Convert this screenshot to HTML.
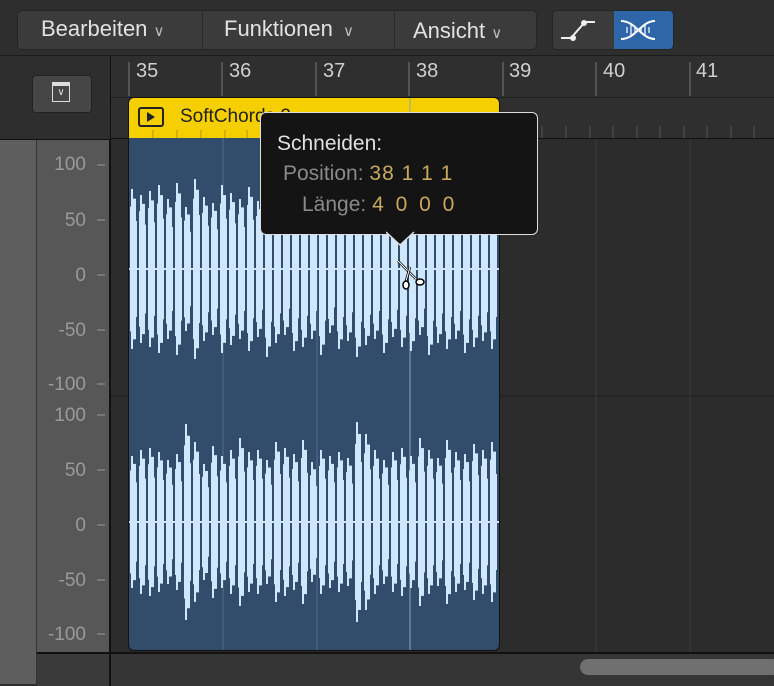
<!DOCTYPE html>
<html><head><meta charset="utf-8"><style>
body{margin:0;width:774px;height:684px;overflow:hidden;background:#2b2b2b;font-family:"Liberation Sans",sans-serif;position:relative}
.a{position:absolute}
.lbl{position:absolute;right:0;width:70px;text-align:right;color:#9a9a9a;font-size:19px}
</style></head><body>
<div class="a" style="left:0;top:0;width:774px;height:55px;background:#2e2e2e;border-bottom:1px solid #1c1c1c"></div>
<div class="a" style="left:17px;top:10px;width:518px;height:38px;background:#3b3b3b;border-radius:5px;border:1px solid #252525"></div>
<div class="a" style="left:202px;top:11px;width:1px;height:38px;background:#282828"></div>
<div class="a" style="left:394px;top:11px;width:1px;height:38px;background:#282828"></div>
<div class="a" style="left:41px;top:16px;color:#e2e2e2;font-size:22px">Bearbeiten <span style="font-size:15px;color:#bbb">&#8744;</span></div>
<div class="a" style="left:224px;top:16px;color:#e2e2e2;font-size:22px">Funktionen <span style="font-size:15px;color:#bbb;margin-left:4px">&#8744;</span></div>
<div class="a" style="left:413px;top:18px;color:#e2e2e2;font-size:22px">Ansicht <span style="font-size:15px;color:#bbb">&#8744;</span></div>
<div class="a" style="left:552px;top:10px;width:120px;height:38px;background:#3b3b3b;border-radius:5px;border:1px solid #252525;overflow:hidden">
 <div class="a" style="left:61px;top:0;width:59px;height:38px;background:#2f66a8"></div>
 <svg class="a" style="left:0;top:0" width="120" height="38"><path d="M8 27h10l14-16h10" stroke="#eee" stroke-width="2" fill="none"/><circle cx="20" cy="27" r="3" fill="#eee"/><circle cx="31" cy="12" r="3" fill="#eee"/>
 <path d="M68 10c15 0 20 18 34 18M68 28c15 0 20-18 34-18" stroke="#fff" stroke-width="2" fill="none"/><path d="M74 16v6M78 14v10M82 17v4M88 17v4M92 14v10M96 16v6" stroke="#fff" stroke-width="1.2"/></svg>
</div>
<div class="a" style="left:0;top:56px;width:110px;height:83px;background:#2e2e2e;border-right:1px solid #111;border-bottom:1px solid #111"></div>
<div class="a" style="left:32px;top:75px;width:58px;height:36px;background:#464646;border-radius:4px;border:1px solid #222"></div>
<div class="a" style="left:52px;top:82px;width:18px;height:20px;border:1.5px solid #ddd;border-top-width:4px;box-sizing:border-box;color:#ddd;font-size:10px;text-align:center;line-height:14px">&#8744;</div>
<div class="a" style="left:111px;top:56px;width:663px;height:82px;background:#2f2f2f;border-bottom:1px solid #111"></div>
<div class="a" style="left:111px;top:97px;width:663px;height:1px;background:#1e1e1e"></div>
<svg class="a" style="left:111px;top:56px" width="663" height="82">
<g stroke="#777" stroke-width="1"><path d="M18 6v34M111 6v34M205 6v34M298 6v34M392 6v34M485 6v34M579 6v34"/>
<path d="M408 70v12M431 70v12M455 70v12M479 70v12M502 70v12M526 70v12M549 70v12M573 70v12M596 70v12M620 70v12M643 70v12" stroke="#555"/></g></svg>
<div class="a" style="left:136px;top:60px;color:#cfcfcf;font-size:20px">35</div>
<div class="a" style="left:229px;top:60px;color:#cfcfcf;font-size:20px">36</div>
<div class="a" style="left:323px;top:60px;color:#cfcfcf;font-size:20px">37</div>
<div class="a" style="left:416px;top:60px;color:#cfcfcf;font-size:20px">38</div>
<div class="a" style="left:509px;top:60px;color:#cfcfcf;font-size:20px">39</div>
<div class="a" style="left:603px;top:60px;color:#cfcfcf;font-size:20px">40</div>
<div class="a" style="left:696px;top:60px;color:#cfcfcf;font-size:20px">41</div>
<div class="a" style="left:0;top:140px;width:36px;height:544px;background:#5e5e5e;border-right:1px solid #333"></div>
<div class="a" style="left:37px;top:140px;width:72px;height:512px;background:#575757;border-right:2px solid #111"></div>
<div class="a" style="left:37px;top:652px;width:72px;height:32px;background:#3a3a3a;border-top:2px solid #111;border-right:2px solid #111"></div>
<div class="a" style="left:37px;top:140px;width:72px;height:512px">
<div class="lbl" style="top:14px;right:23px">100</div><div class="lbl" style="top:70px;right:23px">50</div><div class="lbl" style="top:125px;right:23px">0</div><div class="lbl" style="top:180px;right:23px">-50</div><div class="lbl" style="top:234px;right:23px">-100</div>
<div class="lbl" style="top:265px;right:23px">100</div><div class="lbl" style="top:320px;right:23px">50</div><div class="lbl" style="top:375px;right:23px">0</div><div class="lbl" style="top:430px;right:23px">-50</div><div class="lbl" style="top:484px;right:23px">-100</div>
<svg class="a" style="left:60px;top:0" width="10" height="512"><g stroke="#999"><path d="M0 25h8M0 80h8M0 135h8M0 190h8M0 244h8M0 275h8M0 330h8M0 385h8M0 440h8M0 494h8"/></g></svg>
</div>
<div class="a" style="left:111px;top:140px;width:663px;height:512px;background:#2c2c2c"></div>
<div class="a" style="left:111px;top:395px;width:663px;height:2px;background:#252525"></div>
<svg class="a" style="left:111px;top:140px" width="663" height="512"><g stroke="#3d3d3d"><path d="M485 0v512M579 0v512"/></g></svg>
<div class="a" style="left:111px;top:652px;width:663px;height:32px;background:#353535;border-top:2px solid #111"></div>
<div class="a" style="left:580px;top:659px;width:200px;height:16px;background:#707070;border-radius:8px"></div>
<div class="a" style="left:128px;top:97px;width:370px;height:552px;background:#324d6b;border:1.5px solid #111;border-radius:6px;overflow:hidden">
 <div class="a" style="left:0;top:0;width:370px;height:40px;background:#f5cf00"></div>
 <svg class="a" style="left:0;top:0" width="370" height="552">
 <rect x="10" y="10" width="24" height="18" fill="none" stroke="#222" stroke-width="2" rx="2"/><path d="M18 14l8 5-8 5z" fill="#222"/>
 <g stroke="#b39400"><path d="M24 32v8M48 32v8M72 32v8M96 32v8M118 32v8M142 32v8"/></g>
 <g stroke="#4d6d8e"><path d="M94 40v512M188 40v512"/></g>
 <path d="M281 0v552" stroke="#8fa6bd"/>
 <defs><path id="b" d="M0,-0.78H1V-1H3V-0.88H6V-0.6H7V0.6H6V0.88H3V1H1V0.78H0Z" fill="#cfe6ff"/></defs>
 <rect x="0" y="170" width="370" height="2" fill="#cfe6ff"/>
 <rect x="0" y="423" width="370" height="2" fill="#cfe6ff"/>
 <g transform="translate(0,171)">
 <use href="#b" transform="translate(1,0) scale(1,80)"/><use href="#b" transform="translate(10,0) scale(1,74)"/><use href="#b" transform="translate(19,0) scale(1,78)"/><use href="#b" transform="translate(28,0) scale(1,84)"/><use href="#b" transform="translate(37,0) scale(1,70)"/><use href="#b" transform="translate(46,0) scale(1,86)"/><use href="#b" transform="translate(55,0) scale(1,62)"/><use href="#b" transform="translate(64,0) scale(1,90)"/><use href="#b" transform="translate(73,0) scale(1,72)"/><use href="#b" transform="translate(82,0) scale(1,66)"/><use href="#b" transform="translate(91,0) scale(1,84)"/><use href="#b" transform="translate(100,0) scale(1,76)"/><use href="#b" transform="translate(109,0) scale(1,70)"/><use href="#b" transform="translate(118,0) scale(1,82)"/><use href="#b" transform="translate(127,0) scale(1,68)"/><use href="#b" transform="translate(136,0) scale(1,88)"/><use href="#b" transform="translate(145,0) scale(1,74)"/><use href="#b" transform="translate(154,0) scale(1,66)"/><use href="#b" transform="translate(163,0) scale(1,82)"/><use href="#b" transform="translate(172,0) scale(1,78)"/><use href="#b" transform="translate(181,0) scale(1,70)"/><use href="#b" transform="translate(190,0) scale(1,86)"/><use href="#b" transform="translate(199,0) scale(1,64)"/><use href="#b" transform="translate(208,0) scale(1,80)"/><use href="#b" transform="translate(217,0) scale(1,72)"/><use href="#b" transform="translate(226,0) scale(1,88)"/><use href="#b" transform="translate(235,0) scale(1,76)"/><use href="#b" transform="translate(244,0) scale(1,70)"/><use href="#b" transform="translate(253,0) scale(1,84)"/><use href="#b" transform="translate(262,0) scale(1,68)"/><use href="#b" transform="translate(271,0) scale(1,78)"/><use href="#b" transform="translate(280,0) scale(1,82)"/><use href="#b" transform="translate(289,0) scale(1,66)"/><use href="#b" transform="translate(298,0) scale(1,86)"/><use href="#b" transform="translate(307,0) scale(1,74)"/><use href="#b" transform="translate(316,0) scale(1,80)"/><use href="#b" transform="translate(325,0) scale(1,70)"/><use href="#b" transform="translate(334,0) scale(1,84)"/><use href="#b" transform="translate(343,0) scale(1,78)"/><use href="#b" transform="translate(352,0) scale(1,72)"/><use href="#b" transform="translate(361,0) scale(1,80)"/>
 </g>
 <g transform="translate(0,424)">
 <use href="#b" transform="translate(1,0) scale(1,66)"/><use href="#b" transform="translate(10,0) scale(1,72)"/><use href="#b" transform="translate(19,0) scale(1,74)"/><use href="#b" transform="translate(28,0) scale(1,70)"/><use href="#b" transform="translate(37,0) scale(1,62)"/><use href="#b" transform="translate(46,0) scale(1,68)"/><use href="#b" transform="translate(55,0) scale(1,98)"/><use href="#b" transform="translate(64,0) scale(1,80)"/><use href="#b" transform="translate(73,0) scale(1,58)"/><use href="#b" transform="translate(82,0) scale(1,76)"/><use href="#b" transform="translate(91,0) scale(1,66)"/><use href="#b" transform="translate(100,0) scale(1,72)"/><use href="#b" transform="translate(109,0) scale(1,84)"/><use href="#b" transform="translate(118,0) scale(1,70)"/><use href="#b" transform="translate(127,0) scale(1,72)"/><use href="#b" transform="translate(136,0) scale(1,62)"/><use href="#b" transform="translate(145,0) scale(1,80)"/><use href="#b" transform="translate(154,0) scale(1,74)"/><use href="#b" transform="translate(163,0) scale(1,68)"/><use href="#b" transform="translate(172,0) scale(1,82)"/><use href="#b" transform="translate(181,0) scale(1,60)"/><use href="#b" transform="translate(190,0) scale(1,72)"/><use href="#b" transform="translate(199,0) scale(1,66)"/><use href="#b" transform="translate(208,0) scale(1,70)"/><use href="#b" transform="translate(217,0) scale(1,64)"/><use href="#b" transform="translate(226,0) scale(1,100)"/><use href="#b" transform="translate(235,0) scale(1,88)"/><use href="#b" transform="translate(244,0) scale(1,72)"/><use href="#b" transform="translate(253,0) scale(1,62)"/><use href="#b" transform="translate(262,0) scale(1,70)"/><use href="#b" transform="translate(271,0) scale(1,74)"/><use href="#b" transform="translate(280,0) scale(1,66)"/><use href="#b" transform="translate(289,0) scale(1,84)"/><use href="#b" transform="translate(298,0) scale(1,72)"/><use href="#b" transform="translate(307,0) scale(1,64)"/><use href="#b" transform="translate(316,0) scale(1,82)"/><use href="#b" transform="translate(325,0) scale(1,70)"/><use href="#b" transform="translate(334,0) scale(1,68)"/><use href="#b" transform="translate(343,0) scale(1,78)"/><use href="#b" transform="translate(352,0) scale(1,72)"/><use href="#b" transform="translate(361,0) scale(1,80)"/>
 </g>
 </svg>
 <div class="a" style="left:51px;top:8px;font-size:19px;color:#222">SoftChords 2</div>
</div>
<div class="a" style="left:260px;top:112px;width:276px;height:121px;background:#141414;border:1.5px solid #ddd;border-radius:6px"></div>
<svg class="a" style="left:386px;top:231px" width="30" height="16"><path d="M0 1L14 14L28 1" fill="#141414" stroke="#ddd" stroke-width="1.5"/><rect x="2" y="0" width="24" height="2" fill="#141414"/></svg>
<div class="a" style="left:277px;top:132px;color:#e0e0e0;font-size:21px">Schneiden:</div>
<div class="a" style="left:283px;top:162px;color:#8a8a8a;font-size:21px">Position: <span style="color:#c8a95c;letter-spacing:1px">38 1 1 1</span></div>
<div class="a" style="left:302px;top:193px;color:#8a8a8a;font-size:21px">Länge: <span style="color:#c8a95c;letter-spacing:3px">4 0 0 0</span></div>
<svg class="a" style="left:394px;top:257px" width="36" height="36"><g stroke="#000" stroke-width="1.5" fill="#fff"><path d="M4 4L22 22" stroke-width="2.5"/><path d="M4 4L22 22" stroke="#fff" stroke-width="1"/><path d="M16 10L12 24" stroke-width="2.5"/><path d="M16 10L12 24" stroke="#fff" stroke-width="1"/><ellipse cx="26" cy="25" rx="4" ry="3"/><ellipse cx="12" cy="28" rx="3" ry="4"/></g></svg>
</body></html>
